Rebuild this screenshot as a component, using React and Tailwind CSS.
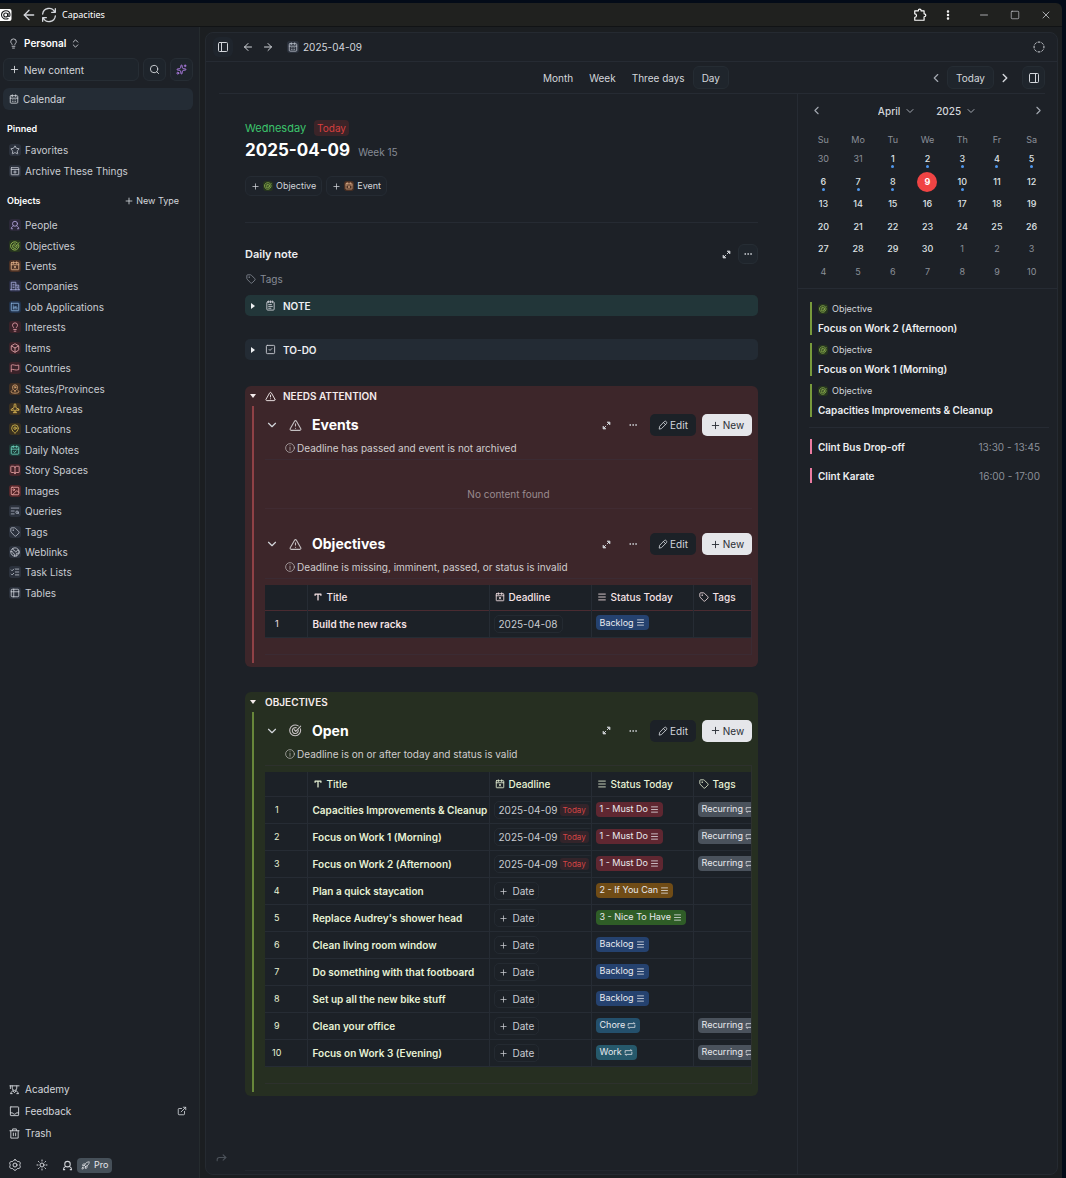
import {
  ArrowLeft, ArrowRight, BookOpen, Box, CalendarCheck, CalendarDays, ChevronDown, ChevronLeft,
  ChevronRight, ChevronsUpDown, CircleDashed, Earth, Ellipsis, EllipsisVertical, ExternalLink, Forward, Image,
  Lightbulb, ListChecks, MapPin, Menu, Minus, NotepadText, PanelLeft, PanelRight,
  Plane, Plus, Rocket, Search, Sparkles, Square, SquareCheck, Star, Sun, Table2, Tag, TextSearch,
  TriangleAlert, X,
} from 'lucide-react';

function Svg({ className, children, strokeWidth = 2 }) {
  return (
    <svg className={className} viewBox="0 0 24 24" fill="none" stroke="currentColor" strokeWidth={strokeWidth}
      strokeLinecap="round" strokeLinejoin="round" aria-hidden="true">
      {children}
    </svg>
  );
}

const TargetIcon = ({ className }) => (
  <Svg className={className}>
    <path d="M21 9A10 10 0 1 1 17 3.500" />
    <path d="M17 11A5.500 5.500 0 1 1 13.500 7" />
    <path d="M9.500 10.500l3 3L21.500 4" />
  </Svg>
);

const EventIcon = ({ className }) => (
  <Svg className={className}>
    <rect x="3" y="4" width="18" height="17" rx="1" />
    <path d="M3 9h18M8 2v4M16 2v4M10.500 13l3 4M13.500 13l-3 4" />
  </Svg>
);

const ArchiveIcon = ({ className }) => (
  <Svg className={className}>
    <rect x="3" y="4" width="18" height="17" rx="1" />
    <path d="M3 8.500h18M12 11.500v6M9 14.500h6" />
  </Svg>
);

const PersonIcon = ({ className }) => (
  <Svg className={className} strokeWidth={2.2}>
    <circle cx="12" cy="9" r="6" />
    <path d="M8 14c-3 1.500-5 4-5 7h3M16 14c3 1.500 5 4 5 7h-3" />
  </Svg>
);

const CompanyIcon = ({ className }) => (
  <Svg className={className}>
    <path d="M3 21V3h11v18M14 10h7v11M1 21h22M7 8h3M7 12h3M7 16h3M17.500 14v3" />
  </Svg>
);

const JobIcon = ({ className }) => (
  <Svg className={className}>
    <rect x="3" y="3" width="18" height="18" rx="1" />
    <path d="M8 11v6M8 7.500v.1M12 17v-6M12 13.500c0-3 4.500-3 4.500 0V17" />
  </Svg>
);

const FlagIcon = ({ className }) => (
  <Svg className={className}>
    <path d="M3 21V5c5-3 9 3 18 0v11c-9 3-13-3-18 0" />
  </Svg>
);

const ProvinceIcon = ({ className }) => (
  <Svg className={className}>
    <path d="M12 17c-4-3-6-5.500-6-9a6 6 0 0 1 12 0c0 3.500-2 6-6 9z" />
    <circle cx="12" cy="8" r="2" />
    <path d="M5 15c-5 4-2 7 7 7s12-3 7-7" />
  </Svg>
);

const MetroIcon = ({ className }) => <Plane className={`${className} -rotate-45`} />;

const AcademyIcon = ({ className }) => (
  <Svg className={className}>
    <path d="M2 4h20M3 4v6M7 4v5a5 5 0 0 0 10 0V4M4 21c0-4 2-5 5-6M20 21c0-4-2-5-5-6M9 15l3 4 3-4M4 21h3M17 21h3" />
  </Svg>
);

const TrayIcon = ({ className }) => (
  <Svg className={className}>
    <rect x="3" y="2" width="18" height="19" rx="1" />
    <path d="M3 15h5c1 4 7 4 8 0h5" />
  </Svg>
);

const TrashIcon = ({ className }) => (
  <Svg className={className}>
    <path d="M2 6h20M8 6V2h8v4M4 6v16h16V6M9.500 11v6M14.500 11v6" />
  </Svg>
);

const GearIcon = ({ className }) => (
  <Svg className={className}>
    <path d="M12 1.500c3 0 3 2.500 4.500 3.300S21 4 22 6.800c1.500 2.600-.5 3.700-.5 5.200s2 2.600.5 5.200c-1 2.800-4 1.200-5.500 2S15 22.500 12 22.500s-3-2.500-4.500-3.300S3 20 2 17.200C.5 14.600 2.500 13.500 2.500 12S.500 9.400 2 6.800C3 4 6 5.600 7.500 4.800S9 1.500 12 1.500z" />
    <circle cx="12" cy="12" r="4" />
  </Svg>
);

const TitleIcon = ({ className }) => (
  <Svg className={className} strokeWidth={3}>
    <path d="M5 8V5h14v3M12 5v14" />
  </Svg>
);

const RepeatIcon = ({ className }) => (
  <Svg className={className}>
    <path d="M3 13V7h18l-3-3M21 11v6H3l3 3" />
  </Svg>
);

const InfoIcon = ({ className }) => (
  <Svg className={className} strokeWidth={1.5}>
    <circle cx="12" cy="12" r="10.500" />
    <path d="M12 10.500v7M12 6.500v.5" />
  </Svg>
);

const ExpandIcon = ({ className }) => (
  <Svg className={className} strokeWidth={2.5}>
    <path d="M15 3h6v6zM3 15v6h6z" fill="currentColor" />
    <path d="M18 6l-4 4M6 18l4-4" />
  </Svg>
);

const PencilIcon = ({ className }) => (
  <Svg className={className}>
    <path d="M3 21l1-6L15.500 3.500c3-2.500 7 2 5 5L9 20zM13 6l5 5" />
  </Svg>
);

const SyncIcon = ({ className }) => (
  <Svg className={className} strokeWidth={2}>
    <path d="M2.500 10.500A9.500 9.500 0 0 1 20.500 7.500M21.500 2.500v5.500H16M21.500 13.500A9.500 9.500 0 0 1 3.500 16.500M2.500 21.500V16H8" />
  </Svg>
);

const objects = [
  { label: 'People', icon: PersonIcon, tint: 'bg-[#2b2838] text-[#a99bd0]' },
  { label: 'Objectives', icon: TargetIcon, tint: 'bg-[#26351f] text-[#a3cd58]' },
  { label: 'Events', icon: EventIcon, tint: 'bg-[#4a3024] text-[#e6b48c]' },
  { label: 'Companies', icon: CompanyIcon, tint: 'bg-[#282b40] text-[#a9aee0]' },
  { label: 'Job Applications', icon: JobIcon, tint: 'bg-[#20314a] text-[#8bb6e0]' },
  { label: 'Interests', icon: Lightbulb, tint: 'bg-[#3a2229] text-[#e79dab]' },
  { label: 'Items', icon: Box, tint: 'bg-[#3a2229] text-[#e8a9ae]' },
  { label: 'Countries', icon: FlagIcon, tint: 'bg-[#3a2229] text-[#e09aa1]' },
  { label: 'States/Provinces', icon: ProvinceIcon, tint: 'bg-[#3f2e22] text-[#dda874]' },
  { label: 'Metro Areas', icon: MetroIcon, tint: 'bg-[#3b3020] text-[#e8c25a]' },
  { label: 'Locations', icon: MapPin, tint: 'bg-[#39301f] text-[#d8bd4f]' },
  { label: 'Daily Notes', icon: CalendarCheck, tint: 'bg-[#1c3a37] text-[#6fd3be]' },
  { label: 'Story Spaces', icon: BookOpen, tint: 'bg-[#43242a] text-[#eba3a6]' },
  { label: 'Images', icon: Image, tint: 'bg-[#54262a] text-[#eea7a5]' },
  { label: 'Queries', icon: TextSearch, tint: 'bg-[#2b313c] text-[#a9b1bf]' },
  { label: 'Tags', icon: Tag, tint: 'bg-[#2b313c] text-[#b9bfca]' },
  { label: 'Weblinks', icon: Earth, tint: 'bg-[#2b313c] text-[#c5cad3]' },
  { label: 'Task Lists', icon: ListChecks, tint: 'bg-[#2b313c] text-[#b9bfca]' },
  { label: 'Tables', icon: Table2, tint: 'bg-[#2b313c] text-[#c5cad3]' },
];

const pinned = [
  { label: 'Favorites', icon: Star, tint: 'bg-[#2b313c] text-[#c5cad3]' },
  { label: 'Archive These Things', icon: ArchiveIcon, tint: 'bg-[#2b313c] text-[#c5cad3]' },
];

const must = { text: '1 - Must Do', icon: Menu, color: 'bg-[#5f2731]' };
const backlog = { text: 'Backlog', icon: Menu, color: 'bg-[#25426f]' };

const attentionRows = [{ title: 'Build the new racks', date: '2025-04-08', status: backlog }];

const openRows = [
  { title: 'Capacities Improvements & Cleanup', date: '2025-04-09', today: true, status: must, recurring: true },
  { title: 'Focus on Work 1 (Morning)', date: '2025-04-09', today: true, status: must, recurring: true },
  { title: 'Focus on Work 2 (Afternoon)', date: '2025-04-09', today: true, status: must, recurring: true },
  { title: 'Plan a quick staycation', status: { text: '2 - If You Can', icon: Menu, color: 'bg-[#704c16]' } },
  { title: "Replace Audrey's shower head", status: { text: '3 - Nice To Have', icon: Menu, color: 'bg-[#2f5d27]' } },
  { title: 'Clean living room window', status: backlog },
  { title: 'Do something with that footboard', status: backlog },
  { title: 'Set up all the new bike stuff', status: backlog },
  { title: 'Clean your office', status: { text: 'Chore', icon: RepeatIcon, color: 'bg-[#24506c]' }, recurring: true },
  { title: 'Focus on Work 3 (Evening)', status: { text: 'Work', icon: RepeatIcon, color: 'bg-[#26596b]' }, recurring: true },
];

const weekdays = ['Su', 'Mo', 'Tu', 'We', 'Th', 'Fr', 'Sa'];

// March 30 to May 10, six full weeks
const days = Array.from({ length: 42 }, (_, i) => {
  const n = i - 1;
  if (n < 1) return { n: n + 31, out: true };
  if (n > 30) return { n: n - 30, out: true };
  return { n, today: n === 9, dot: n <= 10 && n !== 9 };
});

export default function App() {
  return (
    <div className="min-h-screen flex flex-col bg-[#030b18] pt-[3px] pr-1 font-['Inter',sans-serif] text-[11px] leading-4 text-[#d3d6db]">
      <TitleBar />
      <div className="flex-1 flex bg-[#1b1e21]">
        <Sidebar />
        <main className="flex-1 min-w-0 flex flex-col mt-[5px] ml-[5px] mr-1 mb-[3px] rounded-lg border border-[#252a31] bg-[#1d2127]">
          <TopBar />
          <ViewBar />
          <div className="flex-1 flex">
            <DayView />
            <CalendarPanel />
          </div>
        </main>
      </div>
    </div>
  );
}

function TitleBar() {
  return (
    <header className="h-6 flex items-center bg-[#20211f] border-b border-[#111315] rounded-tr-md">
      <svg className="w-3 h-3 shrink-0" viewBox="0 0 24 24" fill="none" aria-hidden="true">
        <rect x="-3" width="26" height="24" rx="4" fill="#fff" />
        <path d="M17 19c-7 3-14-1-14-7s5-8.500 9-8.500 8 3 8 8.500c0 4-4 4-4 0V8" stroke="#16181b" strokeWidth="2.200" />
        <circle cx="11.500" cy="12" r="4" stroke="#16181b" strokeWidth="2.200" />
      </svg>
      <button aria-label="Back" className="ml-[9px]"><ArrowLeft className="w-4 h-4" /></button>
      <button aria-label="Reload" className="ml-1"><SyncIcon className="w-4 h-4" /></button>
      <span className="ml-[5px] font-['Noto_Sans',sans-serif] text-[9px] text-white">Capacities</span>
      <div className="ml-auto flex items-center gap-5 pr-[10px]">
        <div className="flex items-center gap-[15px]">
          <button aria-label="Extensions">
            <Svg className="w-[14px] h-[14px] text-white">
              <path d="M3 5h6c0-4 5-4 5 0h5v5c4 0 4 5 0 5v6H3v-5c4 0 4-6 0-6z" />
            </Svg>
          </button>
          <button aria-label="Menu" className="text-white"><EllipsisVertical className="w-3 h-3" strokeWidth={3} /></button>
        </div>
        <button aria-label="Minimize" className="ml-1"><Minus className="w-3 h-3" strokeWidth={1.5} /></button>
        <button aria-label="Maximize"><Square className="w-[10px] h-[10px]" strokeWidth={1.5} /></button>
        <button aria-label="Close"><X className="w-3 h-3" strokeWidth={1.5} /></button>
      </div>
    </header>
  );
}

function IconBox({ icon: Icon, tint }) {
  return (
    <span className={`w-3 h-3 shrink-0 rounded-[3px] flex items-center justify-center ${tint}`}>
      <Icon className="w-[10px] h-[10px]" />
    </span>
  );
}

function NavLink({ label, icon, tint }) {
  return (
    <a href="#" className="flex items-center gap-1 text-[10px] text-[#c9ccd2]">
      <IconBox icon={icon} tint={tint} />
      {label}
    </a>
  );
}

function Sidebar() {
  return (
    <aside className="w-[200px] shrink-0 flex flex-col border-r border-[#252b2e] bg-[#1d2127] pt-2 text-[10px]">
      <button className="flex items-center self-start h-4 ml-2 font-semibold text-white">
        <Lightbulb className="w-[11px] h-[11px] mr-[5px] text-[#c9ccd2]" />
        Personal
        <ChevronsUpDown className="w-[11px] h-[11px] ml-1 text-[#c9ccd2]" />
      </button>

      <div className="flex gap-1 mt-[7px] ml-[3px] mr-[6px]">
        <button className="flex-1 h-[23px] flex items-center gap-1 px-[5px] rounded-md border border-[#262d34] bg-[#1e242b]">
          <Plus className="w-[11px] h-[11px]" />
          New content
        </button>
        <button aria-label="Search" className="w-[23px] h-[23px] flex items-center justify-center rounded-md border border-[#262d34] bg-[#1e242b]">
          <Search className="w-[11px] h-[11px]" />
        </button>
        <button aria-label="Assistant" className="w-[23px] h-[23px] flex items-center justify-center rounded-md border border-[#262d34] bg-[#1e242b] text-[#b27fe8]">
          <Sparkles className="w-[11px] h-[11px]" />
        </button>
      </div>

      <a href="#" className="h-[22px] mt-[7px] ml-[3px] mr-[6px] px-[6px] flex items-center gap-1 rounded-md bg-[#242c35]">
        <CalendarDays className="w-[10px] h-[10px]" />
        Calendar
      </a>

      <h2 className="mt-[11px] ml-[7px] text-[9px] font-semibold text-white">Pinned</h2>
      <nav className="mt-[3px] ml-[9px] grid h-[41px]">
        {pinned.map((item) => <NavLink key={item.label} {...item} />)}
      </nav>

      <div className="mt-3 ml-[7px] mr-5 flex items-center justify-between">
        <h2 className="text-[9px] font-semibold text-white">Objects</h2>
        <button className="flex items-center gap-[2px] text-[9px]"><Plus className="w-[10px] h-[10px]" />New Type</button>
      </div>
      <nav className="mt-[6px] ml-[9px] grid h-[388px]">
        {objects.map((item) => <NavLink key={item.label} {...item} />)}
      </nav>

      <nav className="mt-auto ml-[9px] mr-3 flex flex-col gap-[6px]">
        <a href="#" className="flex items-center gap-[5px]"><AcademyIcon className="w-[11px] h-[11px]" />Academy</a>
        <a href="#" className="flex items-center gap-[5px]">
          <TrayIcon className="w-[11px] h-[11px]" />Feedback
          <ExternalLink className="w-[10px] h-[10px] ml-auto" />
        </a>
        <a href="#" className="flex items-center gap-[5px]"><TrashIcon className="w-[11px] h-[11px]" />Trash</a>
      </nav>
      <div className="mt-4 mb-[5px] ml-[9px] flex items-center h-4">
        <button aria-label="Settings"><GearIcon className="w-3 h-3" /></button>
        <button aria-label="Theme" className="ml-[15px]"><Sun className="w-3 h-3" /></button>
        <button aria-label="Account" className="ml-[14px]"><PersonIcon className="w-[11px] h-[11px]" /></button>
        <button className="ml-1 h-[15px] px-1 flex items-center gap-1 rounded bg-[#465059] text-[9px] text-[#e5e7eb]">
          <Rocket className="w-[9px] h-[9px]" />Pro
        </button>
      </div>
    </aside>
  );
}

function TopBar() {
  return (
    <div className="h-[29px] flex items-center pl-[7px] pr-3 border-b border-[#262b33]">
      <button aria-label="Toggle sidebar" className="w-5 h-5 flex items-center justify-center rounded-md bg-[#1f252d]">
        <PanelLeft className="w-3 h-3" />
      </button>
      <button aria-label="Back" className="ml-[9px]"><ArrowLeft className="w-3 h-3" /></button>
      <button aria-label="Forward" className="ml-2"><ArrowRight className="w-3 h-3" /></button>
      <span className="ml-[13px] flex items-center gap-1 text-[10px]">
        <IconBox icon={CalendarDays} tint="bg-[#2b313c] text-[#b9bfca]" />
        2025-04-09
      </span>
      <CircleDashed className="w-3 h-3 ml-auto" />
    </div>
  );
}

function ViewBar() {
  return (
    <div className="h-8 ml-[13px] mr-3 grid grid-cols-[1fr_auto_1fr] items-center border-b border-[#262b33] text-[10px]">
      <span />
      <div className="flex items-center">
        <button className="px-2">Month</button>
        <button className="px-2">Week</button>
        <button className="px-2">Three days</button>
        <button className="h-[23px] px-2 rounded-md border border-[#252c33] bg-[#1f252c]">Day</button>
      </div>
      <div className="flex items-center justify-end">
        <button aria-label="Previous day" className="text-[#a3a8b1]"><ChevronLeft className="w-[14px] h-[14px]" /></button>
        <button className="h-[23px] ml-1 px-2 rounded-md border border-[#252c33] bg-[#1f252c]">Today</button>
        <button aria-label="Next day" className="ml-1"><ChevronRight className="w-[14px] h-[14px]" strokeWidth={2.5} /></button>
        <button aria-label="Toggle panel" className="w-[23px] h-[23px] ml-[10px] flex items-center justify-center rounded-md border border-[#252c33] bg-[#1f252c]">
          <PanelRight className="w-3 h-3" />
        </button>
      </div>
    </div>
  );
}

function DayView() {
  return (
    <section className="flex-1 min-w-0 flex flex-col pt-[26px]">
      <div className="px-[39px]">
        <div className="flex items-center gap-2 text-[11px]">
          <span className="text-[#3cc46c]">Wednesday</span>
          <span className="px-[3px] rounded bg-[#3b2428] text-[10px] text-[#d73f3f]">Today</span>
        </div>
        <div className="mt-[2px] flex items-baseline gap-2">
          <h1 className="text-[17px] leading-6 font-bold text-white">2025-04-09</h1>
          <span className="text-[10px] text-[#868b95]">Week 15</span>
        </div>
        <div className="mt-[14px] flex gap-1">
          <AddButton label="Objective" icon={TargetIcon} tint="bg-[#26351f] text-[#a3cd58]" />
          <AddButton label="Event" icon={EventIcon} tint="bg-[#4a3024] text-[#e6b48c]" />
        </div>
        <div className="mt-[26px] border-t border-[#262b33]" />

        <div className="mt-[21px] flex items-center">
          <h2 className="text-[11px] font-semibold text-[#eceef0]">Daily note</h2>
          <button aria-label="Expand" className="ml-auto"><ExpandIcon className="w-[9px] h-[9px]" /></button>
          <button aria-label="More" className="w-5 h-5 ml-[7px] flex items-center justify-center rounded-md border border-[#262d34] bg-[#1f252c]">
            <Ellipsis className="w-[10px] h-[10px]" />
          </button>
        </div>
        <button className="mt-[7px] ml-[1px] flex items-center gap-1 text-[10px] text-[#868b95]">
          <Tag className="w-[10px] h-[10px]" />Tags
        </button>

        <Collapsed label="NOTE" icon={NotepadText} className="mt-2 bg-[#223639]" />
        <Collapsed label="TO-DO" icon={SquareCheck} className="mt-[23px] bg-[#232b34]" />

        <Group label="NEEDS ATTENTION" icon={TriangleAlert} className="mt-[26px] bg-[#3d262a]" bar="bg-[#8f4146]">
          <Collection title="Events" icon={TriangleAlert} note="Deadline has passed and event is not archived">
            <p className="h-[49px] mb-6 pt-[26px] border-b border-[#43303a]/50 text-center text-[10px] text-[#9a8b90]">No content found</p>
          </Collection>
          <Collection title="Objectives" icon={TriangleAlert} note="Deadline is missing, imminent, passed, or status is invalid">
            <ObjectTable rows={attentionRows} text="text-[#f6e3e6]" line="border-[#4a2b31]" />
          </Collection>
        </Group>

        <Group label="OBJECTIVES" className="mt-[25px] bg-[#262f21]" bar="bg-[#67863a]">
          <Collection title="Open" icon={TargetIcon} note="Deadline is on or after today and status is valid">
            <ObjectTable rows={openRows} text="text-[#e8f3d6]" line="border-[#262b33]" />
          </Collection>
        </Group>
      </div>

      <div className="mt-auto pb-[3px]">
        <button aria-label="Share" className="ml-[9px] mb-[6px] flex text-[#4b5159]"><Forward className="w-[13px] h-[13px]" /></button>
        <div className="mx-[39px] border-t border-[#22272e]" />
      </div>
    </section>
  );
}

function AddButton({ label, icon: Icon, tint }) {
  return (
    <button className="h-5 px-[5px] flex items-center gap-[3px] rounded-md border border-[#252b33] bg-[#1e232a] text-[9px]">
      <Plus className="w-[9px] h-[9px]" />
      <span className={`w-[10px] h-[10px] rounded-[3px] flex items-center justify-center ${tint}`}>
        <Icon className="w-2 h-2" />
      </span>
      {label}
    </button>
  );
}

function Caret({ open }) {
  return (
    <svg className="w-[6px] h-[6px]" viewBox="0 0 6 6" fill="currentColor" aria-hidden="true">
      {open ? <path d="M0 1h6L3 5z" /> : <path d="M1 0l4 3-4 3z" />}
    </svg>
  );
}

function Collapsed({ label, icon: Icon, className }) {
  return (
    <button aria-expanded="false" className={`w-full h-[21px] flex items-center px-[5px] rounded-[5px] text-[10px] font-semibold text-[#eef0f2] ${className}`}>
      <Caret />
      <Icon className="w-[11px] h-[11px] ml-[9px] mr-[7px] text-[#c9ccd2]" />
      {label}
    </button>
  );
}

function Group({ label, icon: Icon, className, bar, children }) {
  return (
    <div className={`rounded-md pb-1 ${className}`}>
      <button aria-expanded="true" className="h-5 flex items-center px-[5px] text-[10px] font-semibold text-[#f5ecec]">
        <Caret open />
        {Icon ? <Icon className="w-[11px] h-[11px] ml-[9px] mr-[7px]" /> : <span className="w-[9px]" />}
        {label}
      </button>
      <div className="flex gap-[11px] pl-[7px] pr-[6px]">
        <div className={`w-[2px] shrink-0 ${bar}`} />
        <div className="flex-1 min-w-0 pt-2">{children}</div>
      </div>
    </div>
  );
}

function Collection({ title, icon: Icon, note, children }) {
  return (
    <div>
      <div className="flex items-center h-[22px]">
        <button aria-label="Collapse"><ChevronDown className="w-[14px] h-[14px]" /></button>
        <Icon className="w-[13px] h-[13px] ml-[10px] text-[#c4bfc1]" />
        <h3 className="ml-[10px] text-[14px] leading-5 font-bold text-white">{title}</h3>
        <button aria-label="Expand" className="ml-auto"><ExpandIcon className="w-[9px] h-[9px]" /></button>
        <button aria-label="More" className="ml-[17px]"><Ellipsis className="w-[10px] h-[10px]" /></button>
        <button className="h-[22px] w-[46px] ml-3 flex items-center justify-center gap-[2px] rounded-[5px] bg-[#1c2127] text-[10px]">
          <PencilIcon className="w-[10px] h-[10px]" />Edit
        </button>
        <button className="h-[22px] w-[50px] ml-[6px] flex items-center justify-center gap-[2px] rounded-[5px] bg-[#e5e6ea] text-[10px] text-[#2b2f36]">
          <Plus className="w-[11px] h-[11px]" />New
        </button>
      </div>
      <p className="mt-1 ml-5 flex items-center gap-[2px] text-[10px] text-[#d0cdce]">
        <InfoIcon className="w-[10px] h-[10px]" />
        {note}
      </p>
      <div className="mt-[3px] border-t border-[#3a3540]/40">{children}</div>
    </div>
  );
}

function ObjectTable({ rows, text, line }) {
  return (
    <div className="pt-[6px] pb-4 mb-2 border-r border-b border-[#3a3540]/40 overflow-hidden">
      <table className={`w-full min-w-[530px] table-fixed border-collapse bg-[#1c2127] text-left text-[10px] ${text}`}>
        <colgroup>
          <col className="w-[42px]" />
          <col className="w-[182px]" />
          <col className="w-[102px]" />
          <col className="w-[102px]" />
          <col />
        </colgroup>
        <thead>
          <tr className={`h-[25px] border-b ${line}`}>
            <th className="border-r border-[#262c34]" aria-label="Number" />
            <HeadCell icon={TitleIcon} label="Title" />
            <HeadCell icon={EventIcon} label="Deadline" />
            <HeadCell icon={Menu} label="Status Today" />
            <HeadCell icon={Tag} label="Tags" />
          </tr>
        </thead>
        <tbody>
          {rows.map((row, i) => (
            <tr key={row.title} className="h-[27px] border-b border-[#262c34]">
              <td className="border-r border-[#262c34] pr-[18px] text-center text-[9px]">{i + 1}</td>
              <td className="border-r border-[#262c34] pl-[5px] font-semibold whitespace-nowrap">{row.title}</td>
              <td className="border-r border-[#262c34] pl-1 overflow-hidden"><DateCell row={row} /></td>
              <td className="border-r border-[#262c34] pl-1"><Chip {...row.status} /></td>
              <td className="pl-1">
                {row.recurring && <Chip text="Recurring" icon={RepeatIcon} color="bg-[#4a525c]" />}
              </td>
            </tr>
          ))}
        </tbody>
      </table>
    </div>
  );
}

function HeadCell({ icon: Icon, label }) {
  return (
    <th className="border-r border-[#262c34] pl-[5px] font-medium">
      <span className="flex items-center gap-1"><Icon className="w-[10px] h-[10px]" />{label}</span>
    </th>
  );
}

function DateCell({ row }) {
  return (
    <button className="h-[18px] px-1 flex items-center rounded-[5px] border border-[#242a31] text-[10px] text-[#c9ccd2] whitespace-nowrap">
      {row.date || <><Plus className="w-[9px] h-[9px] mr-[5px]" />Date</>}
      {row.today && <span className="ml-[2px] px-[3px] rounded-[3px] bg-[#33242a] text-[8px] leading-3 text-[#d24545]">Today</span>}
    </button>
  );
}

function Chip({ text, icon: Icon, color }) {
  return (
    <span className={`mb-[2px] inline-flex items-center gap-[2px] h-[15px] px-1 rounded-[4px] align-middle text-[9px] text-[#e9eaee] whitespace-nowrap ${color}`}>
      {text}
      <Icon className="w-[9px] h-[9px]" />
    </span>
  );
}

function CalendarPanel() {
  return (
    <aside className="w-[260px] shrink-0 border-l border-[#262b33] text-[10px]">
      <div className="h-[33px] flex items-center px-3 text-[#a3a8b1]">
        <button aria-label="Previous month"><ChevronLeft className="w-[13px] h-[13px]" /></button>
        <div className="flex-1 flex items-center justify-center gap-5">
          <Picker label="Month" value="April" />
          <Picker label="Year" value="2025" />
        </div>
        <button aria-label="Next month"><ChevronRight className="w-[13px] h-[13px]" /></button>
      </div>

      <div className="px-2 pb-[5px] border-b border-[#262b33]">
        <div className="grid grid-cols-7 h-[21px] items-end text-center text-[9px] text-[#8b9099]">
          {weekdays.map((d) => <span key={d}>{d}</span>)}
        </div>
        <div className="grid grid-cols-7 h-[135px] text-[9px]">
          {days.map((day, i) => <Day key={i} {...day} />)}
        </div>
      </div>

      <ul className="mt-[13px] ml-3 flex flex-col gap-2">
        {['Focus on Work 2 (Afternoon)', 'Focus on Work 1 (Morning)', 'Capacities Improvements & Cleanup'].map((title) => (
          <li key={title} className="h-[33px] pl-[6px] flex flex-col justify-between border-l-2 border-[#789a3c]">
            <span className="flex items-center gap-1 text-[9px] leading-[14px]">
              <span className="w-[10px] h-[10px] rounded-[3px] bg-[#26351f] text-[#a3cd58] flex items-center justify-center">
                <TargetIcon className="w-2 h-2" />
              </span>
              Objective
            </span>
            <span className="text-[10px] leading-[14px] font-semibold text-[#eceef0]">{title}</span>
          </li>
        ))}
      </ul>
      <div className="mt-[10px] ml-[11px] mr-2 border-t border-[#262b33]" />
      <ul className="mt-[11px] ml-3 mr-[17px] flex flex-col gap-[14px]">
        <Meeting title="Clint Bus Drop-off" time="13:30 - 13:45" />
        <Meeting title="Clint Karate" time="16:00 - 17:00" />
      </ul>
    </aside>
  );
}

function Picker({ label, value }) {
  return (
    <label className="flex items-center gap-1">
      <select aria-label={label} className="appearance-none field-sizing-content bg-transparent font-medium text-[#d3d6db]">
        <option>{value}</option>
      </select>
      <ChevronDown className="w-3 h-3" />
    </label>
  );
}

function Day({ n, out, today, dot }) {
  const tone = today
    ? 'bg-[#f04444] font-bold text-white'
    : out ? 'text-[#8b9099]' : 'font-medium text-[#dfe1e5]';

  return (
    <button className="flex items-center justify-center">
      <span className={`relative w-5 h-5 flex items-center justify-center rounded-full ${tone}`}>
        {n}
        {dot && <span className="absolute bottom-[1px] w-[3px] h-[3px] rounded-full bg-[#4f97ee]" />}
      </span>
    </button>
  );
}

function Meeting({ title, time }) {
  return (
    <li className="h-[15px] pl-[6px] flex items-center justify-between border-l-2 border-[#ea7ba1]">
      <span className="font-semibold text-[#eceef0]">{title}</span>
      <span className="text-[#8b9099]">{time}</span>
    </li>
  );
}
